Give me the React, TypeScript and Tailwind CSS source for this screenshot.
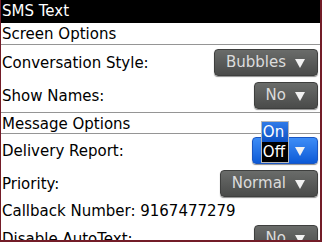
import type { ReactNode } from "react";

const Arrow = () => (
  <svg width="10" height="9" viewBox="0 0 10 9" className="translate-y-[1px]">
    <polygon points="0,0 10,0 5,9" fill="currentColor" />
  </svg>
);

function Drop({ label, blue = false, children }: { label: string; blue?: boolean; children?: ReactNode }) {
  return (
    <div className="relative">
      <div
        className={
          blue
            ? "flex items-center h-[27px] pl-[11px] pr-[12px] gap-[9px] rounded-[4px] border border-[#1a56c2] bg-gradient-to-b from-[#3d8df7] to-[#0c5ad6] text-white shadow-[0_1px_1px_rgba(0,0,0,0.45)]"
            : "flex items-center h-[27px] pl-[11px] pr-[12px] gap-[9px] rounded-[4px] border border-[#3e3f3e] bg-gradient-to-b from-[#6a6c6a] to-[#4a4b4a] text-[#dcdcdc] shadow-[0_1px_1px_rgba(0,0,0,0.45)]"
        }
      >
        <span className="leading-none">{label}</span>
        <span className="text-[#f2f2f2]">
          <Arrow />
        </span>
      </div>
      {children}
    </div>
  );
}

function Row({ h, label, children, line = false }: { h: string; label: string; children?: ReactNode; line?: boolean }) {
  return (
    <div className={`flex items-center justify-between pl-[1px] pr-[2px] shrink-0 ${h} ${line ? "border-b border-[#959595]" : ""}`}>
      <span className="whitespace-nowrap translate-y-[1px]">{label}</span>
      {children}
    </div>
  );
}

export default function App() {
  return (
    <div
      className="w-[322px] h-[242px] overflow-hidden bg-white text-black text-[15px] border-l border-r-2 border-b-2 border-[#731c28] flex flex-col"
      style={{ fontFamily: '"DejaVu Sans", sans-serif' }}
    >
      {/* title bar */}
      <div className="h-[23px] shrink-0 bg-black text-white flex items-center pl-[1px]">SMS Text</div>

      <Row h="h-[22px]" label="Screen Options" line />
      <Row h="h-[34px]" label="Conversation Style:">
        <Drop label="Bubbles" />
      </Row>
      <Row h="h-[34px]" label="Show Names:" line>
        <Drop label="No" />
      </Row>

      <Row h="h-[21px]" label="Message Options" line />
      <Row h="h-[33px]" label="Delivery Report:">
        <Drop label="Off" blue>
          <div className="absolute left-[9px] top-[-16px] w-[28px] border border-[#b8b8b8] text-white leading-none">
            <div className="h-[20px] flex items-center pl-[1px] bg-gradient-to-b from-[#2f7ae8] to-[#0d52c4]">On</div>
            <div className="h-[20px] flex items-center pl-[1px] bg-black">Off</div>
          </div>
        </Drop>
      </Row>
      <Row h="h-[32px]" label="Priority:">
        <Drop label="Normal" />
      </Row>
      <Row h="h-[22px]" label="Callback Number: 9167477279" />
      <Row h="h-[34px]" label="Disable AutoText:">
        <Drop label="No" />
      </Row>
    </div>
  );
}
